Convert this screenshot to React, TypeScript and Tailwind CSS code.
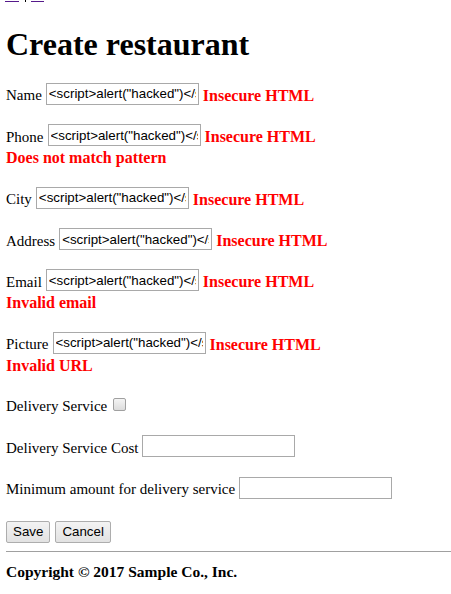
const serif = "font-['Liberation_Serif','Times_New_Roman',serif]";
const sans = "font-['Liberation_Sans',Arial,sans-serif]";
const hacked = '<script>alert("hacked")</script>';

const TextBox = ({ value = "" }: { value?: string }) => (
  <input
    type="text"
    readOnly
    defaultValue={value}
    className={`${sans} block w-[153px] h-[22px] border border-[#a9a9a9] bg-white px-[2px] py-[1px] text-[13.33px] text-black outline-none`}
  />
);

const Error = ({ children }: { children: React.ReactNode }) => (
  <strong className="font-bold text-[16px] text-[#ff0000] whitespace-nowrap">{children}</strong>
);

const Field = ({
  label,
  value,
  errors = [],
}: {
  label: string;
  value?: string;
  errors?: string[];
}) => (
  <div className="mt-[16.4px]">
    <div className="flex items-center gap-[4px] h-[25px] pt-[3px]">
      <span className="whitespace-nowrap mt-[4px]">{label}</span>
      <TextBox value={value} />
      {errors[0] && <span className="mt-[4px]"><Error>{errors[0]}</Error></span>}
    </div>
    {errors.slice(1).map((e) => (
      <div key={e} className="h-[21px] leading-[21px] pt-[1px]">
        <Error>{e}</Error>
      </div>
    ))}
  </div>
);

const Button = ({ children }: { children: React.ReactNode }) => (
  <button className="h-[22px] px-[6px] border border-[#adadad] rounded-[2px] bg-gradient-to-b from-[#f3f3f3] to-[#e2e2e2] text-black">
    {children}
  </button>
);

export default function App() {
  return (
    <div className={`${serif} bg-white text-black text-[15px] leading-[normal] pl-[6px] min-h-[594px] overflow-hidden`}>
      {/* nav links scrolled out of view */}
      <div className="flex items-start h-[5px] pt-[1px]">
        <span className="block w-[14px] h-[1px] ml-[-1px] bg-[#551a8b]" />
        <span className="block w-[1px] h-[2px] mt-[-1px] ml-[6px] bg-black" />
        <span className="block w-[13px] h-[1px] ml-[5px] bg-[#551a8b]" />
      </div>

      <h1 className="text-[32px] font-bold mt-[21.44px] mb-[3.2px]">Create restaurant</h1>

      <Field label="Name" value={hacked} errors={["Insecure HTML"]} />
      <Field label="Phone" value={hacked} errors={["Insecure HTML", "Does not match pattern"]} />
      <Field label="City" value={hacked} errors={["Insecure HTML"]} />
      <Field label="Address" value={hacked} errors={["Insecure HTML"]} />
      <Field label="Email" value={hacked} errors={["Insecure HTML", "Invalid email"]} />
      <Field label="Picture" value={hacked} errors={["Insecure HTML", "Invalid URL"]} />

      <div className="mt-[16.2px] flex items-center gap-[6px] h-[25px] pt-[3px]">
        <span className="mt-[4px]">Delivery Service</span>
        <span className="block w-[13px] h-[13px] rounded-[2px] border border-[#a0a0a0] bg-gradient-to-b from-[#f4f4f4] to-[#dcdcdc]" />
      </div>

      <Field label="Delivery Service Cost" />
      <Field label="Minimum amount for delivery service" />

      <div className={`${sans} mt-[22px] flex gap-[5px] text-[13.33px]`}>
        <Button>Save</Button>
        <Button>Cancel</Button>
      </div>

      <hr className="border-0 border-t border-[#a0a0a0] mt-[8px] mb-[11px]" />

      <p className="font-bold text-[15.5px]">Copyright © 2017 Sample Co., Inc.</p>
    </div>
  );
}
